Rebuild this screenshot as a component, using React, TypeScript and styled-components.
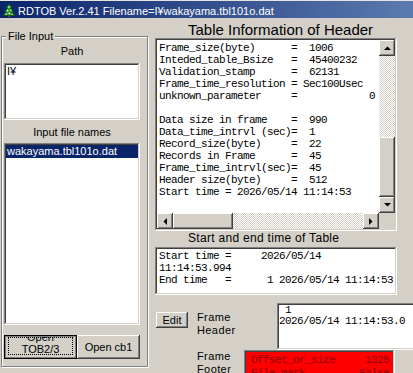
import React from "react";
import styled, { createGlobalStyle } from "styled-components";

const raised =
  "inset -1px -1px #404040, inset 1px 1px #ffffff, inset -2px -2px #808080, inset 2px 2px #d4d0c8";
const sunken =
  "inset -1px -1px #ffffff, inset 1px 1px #808080, inset -2px -2px #d4d0c8, inset 2px 2px #404040";
const dither = "repeating-conic-gradient(#d4d0c8 0 25%, #ffffff 0 50%) 0 0 / 2px 2px";

const GlobalStyle = createGlobalStyle`
  html, body { margin: 0; padding: 0; background: #d4d0c8; }
  body { font-family: "Liberation Sans", Arial, sans-serif; color: #000; }
`;

const Window = styled.div`
  width: 413px;
  height: 373px;
  overflow: hidden;
  background: #d4d0c8;
  border-top: 1px solid #e6e4de;
  box-sizing: border-box;
  display: flex;
  flex-direction: column;
`;

const TitleBar = styled.div`
  height: 17px;
  flex: none;
  display: flex;
  align-items: center;
  gap: 2px;
  padding-left: 2px;
  background: linear-gradient(90deg, #0a246a 0px, #a6caf0 800px);
  color: #fff;
  font-size: 11px;
  white-space: nowrap;
`;

const TitleText = styled.span`
  padding-top: 2px;
`;

const Body = styled.div`
  display: flex;
  align-items: flex-start;
`;

const GroupBox = styled.div`
  margin: 18px 0 0 1px;
  width: 147px;
  height: 331px;
  box-sizing: border-box;
  border: 1px solid #808080;
  box-shadow: inset 1px 1px #ffffff, 1px 1px #ffffff;
  padding-left: 2px;
  display: flex;
  flex-direction: column;
`;

const Legend = styled.div`
  align-self: flex-start;
  margin: -7px 0 0 2px;
  padding: 0 2px;
  background: #d4d0c8;
  font-size: 11px;
  line-height: 13px;
`;

const Caption = styled.div<{ $mt: number }>`
  width: 136px;
  margin-top: ${(p) => p.$mt}px;
  text-align: center;
  font-size: 11px;
  line-height: 13px;
`;

const Field = styled.div<{ $h: number; $mt: number }>`
  width: 136px;
  height: ${(p) => p.$h}px;
  margin-top: ${(p) => p.$mt}px;
  box-sizing: border-box;
  padding: 2px;
  background: #fff;
  box-shadow: ${sunken};
  font-size: 11px;
  line-height: 12px;
`;

const FieldText = styled.div`
  padding-left: 1px;
`;

const ListItem = styled.div<{ $selected?: boolean }>`
  height: 13px;
  line-height: 13px;
  padding-left: 1px;
  background: ${(p) => (p.$selected ? "#0a246a" : "transparent")};
  color: ${(p) => (p.$selected ? "#fff" : "#000")};
`;

const ButtonRow = styled.div`
  display: flex;
  margin-top: 10px;
`;

const Button = styled.div<{ $w: number; $h: number }>`
  width: ${(p) => p.$w}px;
  height: ${(p) => p.$h}px;
  box-sizing: border-box;
  background: #d4d0c8;
  box-shadow: ${raised};
  display: flex;
  align-items: center;
  justify-content: center;
  font-size: 11px;
  flex: none;
`;

const DefaultButton = styled.div<{ $w: number; $h: number }>`
  position: relative;
  width: ${(p) => p.$w}px;
  height: ${(p) => p.$h}px;
  box-sizing: border-box;
  border: 1px solid #000;
  box-shadow: inset 0 0 0 1px #808080;
  padding: 1px;
  font-size: 11px;
  flex: none;
  &::after {
    content: "";
    position: absolute;
    left: 3px;
    right: 3px;
    top: 1px;
    bottom: 3px;
    border: 1px dotted #000;
  }
`;

const ClipArea = styled.div`
  height: 100%;
  overflow: hidden;
`;

const TwoLine = styled.div`
  margin-top: -6px;
  text-align: center;
  line-height: 12px;
`;

const RightColumn = styled.div`
  margin-left: 7px;
  width: 250px;
  display: flex;
  flex-direction: column;
  padding-top: 4px;
`;

const SectionTitle = styled.div<{ $size: number; $lh: number; $ls?: number }>`
  padding-left: 33px;
  font-size: ${(p) => p.$size}px;
  line-height: ${(p) => p.$lh}px;
  letter-spacing: ${(p) => p.$ls ?? 0}px;
  white-space: nowrap;
`;

const Memo = styled.div<{ $w: number; $h: number; $mt?: number; $bg?: string }>`
  width: ${(p) => p.$w}px;
  height: ${(p) => p.$h}px;
  margin-top: ${(p) => p.$mt ?? 0}px;
  flex: none;
  box-sizing: border-box;
  padding: 2px;
  background: ${(p) => p.$bg ?? "#fff"};
  box-shadow: ${sunken};
  overflow: hidden;
`;

const ScrollMemo = styled(Memo)`
  display: grid;
  grid-template-columns: 1fr 16px;
  grid-template-rows: 1fr 16px;
`;

const Mono = styled.pre<{ $pad: string; $lh?: number; $color?: string }>`
  margin: 0;
  padding: ${(p) => p.$pad};
  font-family: "Liberation Mono", "DejaVu Sans Mono", monospace;
  font-size: 11px;
  letter-spacing: -0.6px;
  line-height: ${(p) => p.$lh ?? 12}px;
  color: ${(p) => p.$color ?? "#000"};
  white-space: pre;
  overflow: hidden;
`;

const Bar = styled.div<{ $dir: "v" | "h" }>`
  display: flex;
  flex-direction: ${(p) => (p.$dir === "v" ? "column" : "row")};
  background: #d4d0c8;
`;

const Track = styled.div<{ $dir: "v" | "h"; $end?: boolean }>`
  flex: 1;
  display: flex;
  flex-direction: ${(p) => (p.$dir === "v" ? "column" : "row")};
  justify-content: ${(p) => (p.$end ? "flex-end" : "flex-start")};
  background: ${dither};
`;

const Thumb = styled.div<{ $dir: "v" | "h"; $len: number }>`
  flex: none;
  width: ${(p) => (p.$dir === "v" ? "16px" : `${p.$len}px`)};
  height: ${(p) => (p.$dir === "v" ? `${p.$len}px` : "16px")};
  background: #d4d0c8;
  box-shadow: ${raised};
`;

const ArrowButton = styled.div`
  flex: none;
  width: 16px;
  height: 16px;
  background: #d4d0c8;
  box-shadow: ${raised};
  display: flex;
  align-items: center;
  justify-content: center;
`;

const Corner = styled.div`
  background: #d4d0c8;
`;

const FrameRow = styled.div<{ $mt: number }>`
  display: flex;
  align-items: flex-start;
  margin-top: ${(p) => p.$mt}px;
`;

const EditButton = styled(Button)`
  margin: 9px 0 0 1px;
`;

const FrameLabel = styled.div<{ $ml: number; $mt: number }>`
  width: ${(p) => 89 - p.$ml}px;
  margin: ${(p) => p.$mt}px 0 0 ${(p) => p.$ml}px;
  font-size: 11px;
  letter-spacing: 0.4px;
  line-height: 13px;
  flex: none;
`;

const GridBody = styled.div`
  padding-top: 2px;
`;

const GridRow = styled.div`
  display: flex;
  justify-content: space-between;
  padding: 0 4px 0 5px;
  font-family: "Liberation Mono", "DejaVu Sans Mono", monospace;
  font-size: 11px;
  letter-spacing: -0.6px;
  line-height: 13px;
  color: #8a0000;
  white-space: pre;
`;

type Dir = "up" | "down" | "left" | "right";
const arrowPts: Record<Dir, string> = {
  up: "0,4 7,4 3.5,0.5",
  down: "0,0 7,0 3.5,3.5",
  left: "4,0 4,7 0.5,3.5",
  right: "0,0 0,7 3.5,3.5",
};

const Arrow = ({ dir }: { dir: Dir }) => {
  const v = dir === "up" || dir === "down";
  return (
    <ArrowButton>
      <svg width={v ? 7 : 4} height={v ? 4 : 7} viewBox={v ? "0 0 7 4" : "0 0 4 7"}>
        <polygon points={arrowPts[dir]} fill="#000" />
      </svg>
    </ArrowButton>
  );
};

const TreeIcon = () => (
  <svg width="14" height="14" viewBox="0 0 14 14">
    <polygon points="7,1 10,5 8.5,5 11.5,9 9.5,9 13,12.5 1,12.5 4.5,9 2.5,9 5.5,5 4,5" fill="#2e9a2e" stroke="#0b4f14" strokeWidth="0.8" />
    <rect x="6" y="12.5" width="2" height="1.5" fill="#7a4b12" />
    <circle cx="7" cy="4" r="0.8" fill="#fff" />
    <circle cx="5.5" cy="7.5" r="0.8" fill="#fff" />
    <circle cx="8.8" cy="7.2" r="0.8" fill="#ffe36b" />
    <circle cx="4.2" cy="11" r="0.8" fill="#fff" />
    <circle cx="7.3" cy="10.4" r="0.8" fill="#fff" />
    <circle cx="10" cy="11.2" r="0.8" fill="#ffe36b" />
  </svg>
);

const headerInfo = [
  "Frame_size(byte)      =  1006",
  "Inteded_table_Bsize   =  45400232",
  "Validation_stamp      =  62131",
  "Frame_time_resolution = Sec100Usec",
  "unknown_parameter     =            0",
  "",
  "Data size in frame    =  990",
  "Data_time_intrvl (sec)=  1",
  "Record_size(byte)     =  22",
  "Records in Frame      =  45",
  "Frame_time_intrvl(sec)=  45",
  "Header size(byte)     =  512",
  "Start time = 2026/05/14 11:14:53",
];

const tableTimes = [
  "Start time =     2026/05/14",
  "11:14:53.994",
  "End time   =      1 2026/05/14 11:14:53",
];

const footer = [
  ["Offset_or_size", "1325"],
  ["File_mark", "False"],
];

export default function App() {
  return (
    <Window>
      <GlobalStyle />
      <TitleBar>
        <TreeIcon />
        <TitleText>RDTOB Ver.2.41 Filename=I¥wakayama.tbl101o.dat</TitleText>
      </TitleBar>
      <Body>
        <GroupBox>
          <Legend>File Input</Legend>
          <Caption $mt={2}>Path</Caption>
          <Field $h={57} $mt={5}>
            <FieldText>I¥</FieldText>
          </Field>
          <Caption $mt={6}>Input file names</Caption>
          <Field $h={182} $mt={4}>
            <ListItem $selected>wakayama.tbl101o.dat</ListItem>
          </Field>
          <ButtonRow>
            <DefaultButton $w={73} $h={24}>
              <ClipArea>
                <TwoLine>
                  Open
                  <br />
                  TOB2/3
                </TwoLine>
              </ClipArea>
            </DefaultButton>
            <Button $w={63} $h={24}>Open cb1</Button>
          </ButtonRow>
        </GroupBox>
        <RightColumn>
          <SectionTitle $size={15} $lh={16}>Table Information of Header</SectionTitle>
          <ScrollMemo $w={242} $h={193}>
            <Mono $pad="2px 0 0 2px">{headerInfo.join("\n")}</Mono>
            <Bar $dir="v">
              <Arrow dir="up" />
              <Track $dir="v" $end>
                <Thumb $dir="v" $len={60} />
              </Track>
              <Arrow dir="down" />
            </Bar>
            <Bar $dir="h">
              <Arrow dir="left" />
              <Track $dir="h">
                <Thumb $dir="h" $len={60} />
              </Track>
              <Arrow dir="right" />
            </Bar>
            <Corner />
          </ScrollMemo>
          <SectionTitle $size={12} $lh={14} $ls={0.3}>Start and end time of Table</SectionTitle>
          <Memo $w={242} $h={48} $mt={2}>
            <Mono $pad="1px 0 0 2px">{tableTimes.join("\n")}</Mono>
          </Memo>
          <FrameRow $mt={8}>
            <EditButton $w={32} $h={16}>Edit</EditButton>
            <FrameLabel $ml={9} $mt={8}>
              Frame
              <br />
              Header
            </FrameLabel>
            <Memo $w={151} $h={47}>
              <Mono $pad="0" $lh={11}>{" 1\n2026/05/14 11:14:53.0"}</Mono>
            </Memo>
          </FrameRow>
          <FrameRow $mt={0}>
            <FrameLabel $ml={42} $mt={0}>
              Frame
              <br />
              Footer
            </FrameLabel>
            <Memo $w={151} $h={60} $bg="#ff0000">
              <GridBody>
                {footer.map(([k, v]) => (
                  <GridRow key={k}>
                    <span>{k}</span>
                    <span>{v}</span>
                  </GridRow>
                ))}
              </GridBody>
            </Memo>
          </FrameRow>
        </RightColumn>
      </Body>
    </Window>
  );
}
